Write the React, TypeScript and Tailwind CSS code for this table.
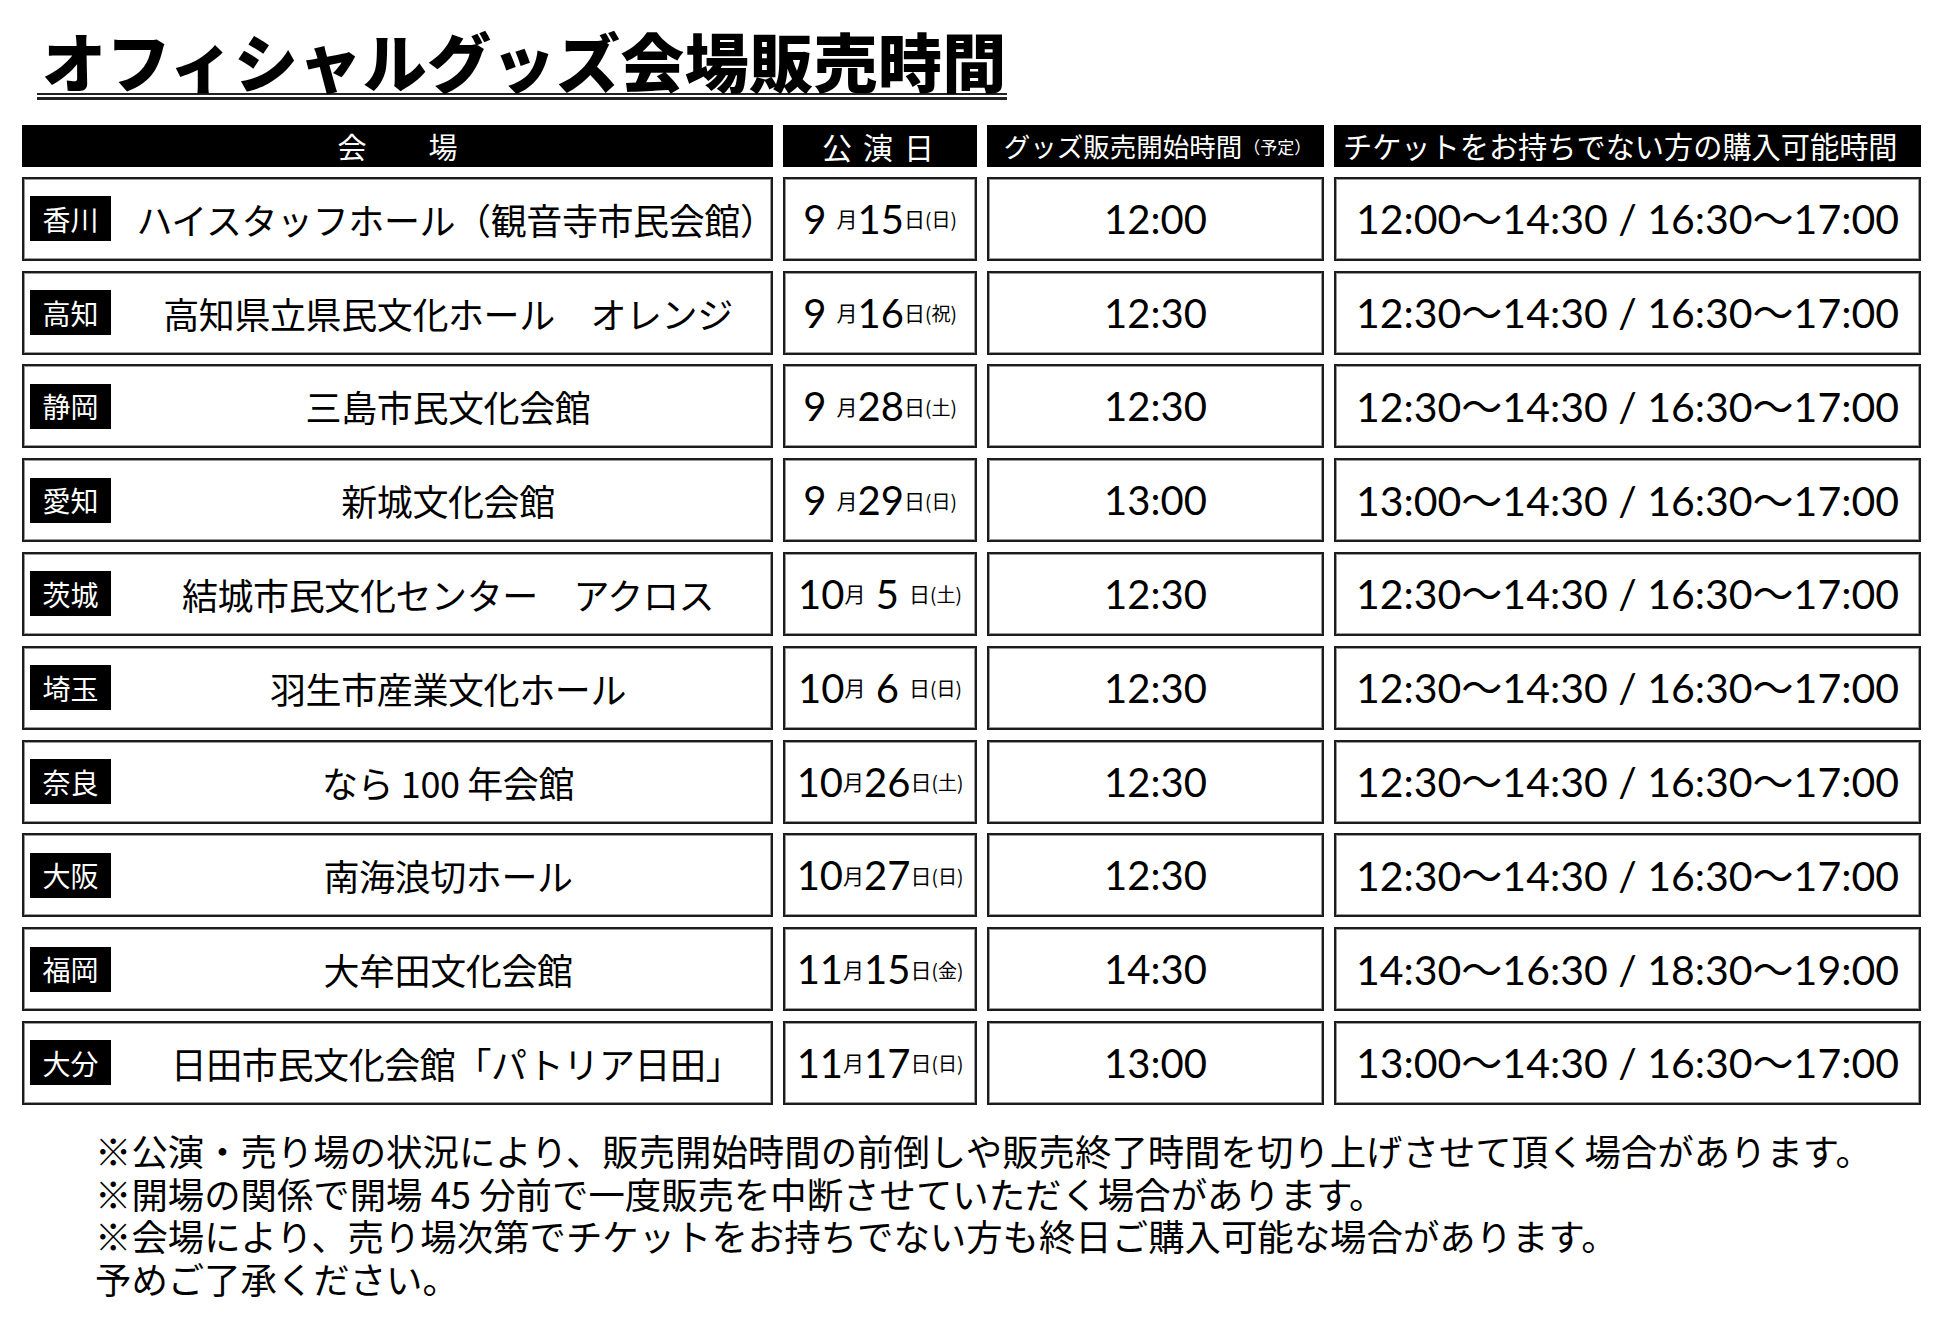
import React from "react";

const jp = "font-['Noto_Sans_CJK_JP',sans-serif]";
const num = "font-['Lato','Noto_Sans_CJK_JP',sans-serif]";

type Row = {
  pref: string;
  venue: string;
  month: string;
  day: string;
  dow: string;
  start: string;
  buy: string;
};

const rows: Row[] = [
  { pref: "香川", venue: "ハイスタッフホール（観音寺市民会館）", month: "9 ", day: "15", dow: "日", start: "12:00", buy: "12:00～14:30 / 16:30～17:00" },
  { pref: "高知", venue: "高知県立県民文化ホール　オレンジ", month: "9 ", day: "16", dow: "祝", start: "12:30", buy: "12:30～14:30 / 16:30～17:00" },
  { pref: "静岡", venue: "三島市民文化会館", month: "9 ", day: "28", dow: "土", start: "12:30", buy: "12:30～14:30 / 16:30～17:00" },
  { pref: "愛知", venue: "新城文化会館", month: "9 ", day: "29", dow: "日", start: "13:00", buy: "13:00～14:30 / 16:30～17:00" },
  { pref: "茨城", venue: "結城市民文化センター　アクロス", month: "10", day: " 5 ", dow: "土", start: "12:30", buy: "12:30～14:30 / 16:30～17:00" },
  { pref: "埼玉", venue: "羽生市産業文化ホール", month: "10", day: " 6 ", dow: "日", start: "12:30", buy: "12:30～14:30 / 16:30～17:00" },
  { pref: "奈良", venue: "なら 100 年会館", month: "10", day: "26", dow: "土", start: "12:30", buy: "12:30～14:30 / 16:30～17:00" },
  { pref: "大阪", venue: "南海浪切ホール", month: "10", day: "27", dow: "日", start: "12:30", buy: "12:30～14:30 / 16:30～17:00" },
  { pref: "福岡", venue: "大牟田文化会館", month: "11", day: "15", dow: "金", start: "14:30", buy: "14:30～16:30 / 18:30～19:00" },
  { pref: "大分", venue: "日田市民文化会館「パトリア日田」", month: "11", day: "17", dow: "日", start: "13:00", buy: "13:00～14:30 / 16:30～17:00" },
];

const notes = [
  "※公演・売り場の状況により、販売開始時間の前倒しや販売終了時間を切り上げさせて頂く場合があります。",
  "※開場の関係で開場 45 分前で一度販売を中断させていただく場合があります。",
  "※会場により、売り場次第でチケットをお持ちでない方も終日ご購入可能な場合があります。",
  "予めご了承ください。",
];

const cell = "h-[84px] border-2 border-[#1c1c1c] bg-white flex items-center shadow-[inset_0_0_0_1px_#9a9a9a]";

// closing brackets carry blank space on their right; trim it so the name centres on its ink
function Venue({ name }: { name: string }) {
  const last = name.slice(-1);
  if (last === "）" || last === "」") {
    return (
      <>
        {name.slice(0, -1)}
        <span className="mr-[-16px]">{last}</span>
      </>
    );
  }
  return <>{name}</>;
}

export default function App() {
  return (
    <div className={`w-[1945px] h-[1326px] bg-white text-black ${jp} pt-[27px]`}>
      <div className="ml-[37px] w-[970px]">
        <h1 className="pl-[5px] text-[64px] leading-none font-black tracking-[0.4px] whitespace-nowrap">
          オフィシャルグッズ会場販売時間
        </h1>
        <div className="mt-[2px] h-[2px] bg-[#222]" />
        <div className="mt-[2px] h-[3px] bg-[#222]" />
      </div>

      <div className="mt-[25px] px-[22px]">
        <div className="grid grid-cols-[751px_194px_337px_587px] gap-x-[10px] gap-y-[9.8px]">
          <div className="h-[42px] bg-black text-white flex items-center justify-center text-[29px] leading-none">
            <span>会</span>
            <span className="ml-[62px]">場</span>
          </div>
          <div className="h-[42px] bg-black text-white flex items-center justify-center text-[30px] leading-none tracking-[11px] pl-[7px]">
            公演日
          </div>
          <div className="h-[42px] bg-black text-white flex items-center justify-center text-[26.5px] leading-none whitespace-nowrap pl-[4px]">
            グッズ販売開始時間<span className="text-[17px] ml-[1px]">（予定）</span>
          </div>
          <div className="h-[42px] bg-black text-white flex items-center justify-start pl-[9px] text-[29.2px] leading-none whitespace-nowrap">
            チケットをお持ちでない方の購入可能時間
          </div>

          {rows.map((r) => (
            <React.Fragment key={r.pref}>
              <div className={`${cell} pl-[6px]`}>
                <div className="w-[81px] h-[45px] bg-black text-white text-[28px] leading-none flex items-center justify-center shrink-0">
                  {r.pref}
                </div>
                <div className="flex-1 text-center text-[36px] leading-none whitespace-nowrap tracking-[-0.4px] pl-[14px]">
                  <Venue name={r.venue} />
                </div>
              </div>
              <div className={`${cell} justify-center whitespace-nowrap`}>
                <span className={`${num} text-[40px] leading-none whitespace-pre`}>{r.month}</span>
                <span className="text-[21px] leading-none">月</span>
                <span className={`${num} text-[40px] leading-none whitespace-pre`}>{r.day}</span>
                <span className="text-[21px] leading-none">日</span>
                <span className="text-[19px] leading-none">({r.dow})</span>
              </div>
              <div className={`${cell} justify-center`}>
                <span className={`${num} text-[40px] leading-none`}>{r.start}</span>
              </div>
              <div className={`${cell} justify-center`}>
                <span className={`${num} text-[41px] leading-none whitespace-pre`}>{r.buy}</span>
              </div>
            </React.Fragment>
          ))}
        </div>
      </div>

      <div className="mt-[24px] ml-[95px] text-[36.4px] leading-[42.6px] whitespace-nowrap">
        {notes.map((n) => (
          <div key={n}>{n}</div>
        ))}
      </div>
    </div>
  );
}
